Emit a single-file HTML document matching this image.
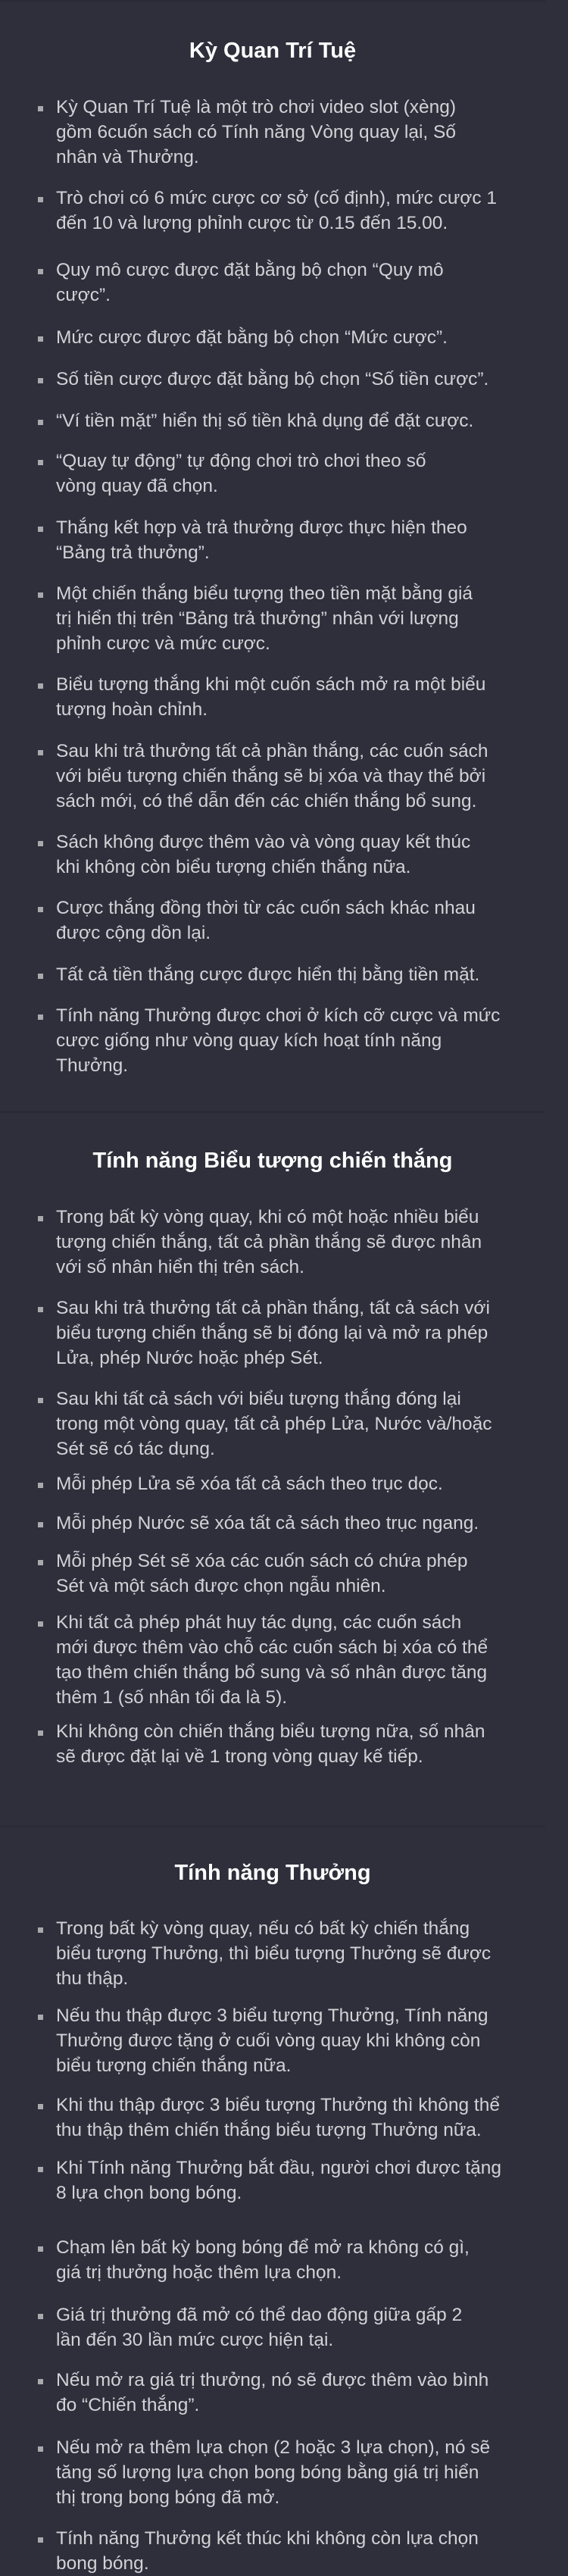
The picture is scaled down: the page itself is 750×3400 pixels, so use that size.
<!DOCTYPE html>
<html><head><meta charset="utf-8">
<style>
html,body{margin:0;padding:0;}
body{width:750px;height:3369px;overflow:hidden;background:#2e2f3b;position:relative;font-family:"Liberation Sans","DejaVu Sans",sans-serif;}
.bar{position:absolute;left:0;width:720px;height:3px;background:#292a34;}
.t{position:absolute;left:0;width:720px;text-align:center;color:#fff;font-size:29px;font-weight:bold;line-height:40px;white-space:nowrap;}
.i{position:absolute;left:74px;color:#d2d2d6;font-size:24.5px;line-height:33px;white-space:nowrap;}
.i:before{content:"";position:absolute;left:-24px;top:15px;width:7px;height:7px;background:#a9a9ae;}
</style></head><body>
<div class="bar" style="top:0"></div>
<div class="t" style="top:47px">Kỳ Quan Trí Tuệ</div>
<div class="i" style="top:125px">Kỳ Quan Trí Tuệ là một trò chơi video slot (xèng)<br>gồm 6cuốn sách có Tính năng Vòng quay lại, Số<br>nhân và Thưởng.</div>
<div class="i" style="top:245px">Trò chơi có 6 mức cược cơ sở (cố định), mức cược 1<br>đến 10 và lượng phỉnh cược từ 0.15 đến 15.00.</div>
<div class="i" style="top:340px">Quy mô cược được đặt bằng bộ chọn “Quy mô<br>cược”.</div>
<div class="i" style="top:429px">Mức cược được đặt bằng bộ chọn “Mức cược”.</div>
<div class="i" style="top:484px">Số tiền cược được đặt bằng bộ chọn “Số tiền cược”.</div>
<div class="i" style="top:539px">“Ví tiền mặt” hiển thị số tiền khả dụng để đặt cược.</div>
<div class="i" style="top:592px">“Quay tự động” tự động chơi trò chơi theo số<br>vòng quay đã chọn.</div>
<div class="i" style="top:680px">Thắng kết hợp và trả thưởng được thực hiện theo<br>“Bảng trả thưởng”.</div>
<div class="i" style="top:767px">Một chiến thắng biểu tượng theo tiền mặt bằng giá<br>trị hiển thị trên “Bảng trả thưởng” nhân với lượng<br>phỉnh cược và mức cược.</div>
<div class="i" style="top:887px">Biểu tượng thắng khi một cuốn sách mở ra một biểu<br>tượng hoàn chỉnh.</div>
<div class="i" style="top:975px">Sau khi trả thưởng tất cả phần thắng, các cuốn sách<br>với biểu tượng chiến thắng sẽ bị xóa và thay thế bởi<br>sách mới, có thể dẫn đến các chiến thắng bổ sung.</div>
<div class="i" style="top:1095px">Sách không được thêm vào và vòng quay kết thúc<br>khi không còn biểu tượng chiến thắng nữa.</div>
<div class="i" style="top:1182px">Cược thắng đồng thời từ các cuốn sách khác nhau<br>được cộng dồn lại.</div>
<div class="i" style="top:1270px">Tất cả tiền thắng cược được hiển thị bằng tiền mặt.</div>
<div class="i" style="top:1324px">Tính năng Thưởng được chơi ở kích cỡ cược và mức<br>cược giống như vòng quay kích hoạt tính năng<br>Thưởng.</div>

<div class="bar" style="top:1466px"></div>
<div class="t" style="top:1512px">Tính năng Biểu tượng chiến thắng</div>
<div class="i" style="top:1590px">Trong bất kỳ vòng quay, khi có một hoặc nhiều biểu<br>tượng chiến thắng, tất cả phần thắng sẽ được nhân<br>với số nhân hiển thị trên sách.</div>
<div class="i" style="top:1710px">Sau khi trả thưởng tất cả phần thắng, tất cả sách với<br>biểu tượng chiến thắng sẽ bị đóng lại và mở ra phép<br>Lửa, phép Nước hoặc phép Sét.</div>
<div class="i" style="top:1830px">Sau khi tất cả sách với biểu tượng thắng đóng lại<br>trong một vòng quay, tất cả phép Lửa, Nước và/hoặc<br>Sét sẽ có tác dụng.</div>
<div class="i" style="top:1942px">Mỗi phép Lửa sẽ xóa tất cả sách theo trục dọc.</div>
<div class="i" style="top:1994px">Mỗi phép Nước sẽ xóa tất cả sách theo trục ngang.</div>
<div class="i" style="top:2044px">Mỗi phép Sét sẽ xóa các cuốn sách có chứa phép<br>Sét và một sách được chọn ngẫu nhiên.</div>
<div class="i" style="top:2125px">Khi tất cả phép phát huy tác dụng, các cuốn sách<br>mới được thêm vào chỗ các cuốn sách bị xóa có thể<br>tạo thêm chiến thắng bổ sung và số nhân được tăng<br>thêm 1 (số nhân tối đa là 5).</div>
<div class="i" style="top:2269px">Khi không còn chiến thắng biểu tượng nữa, số nhân<br>sẽ được đặt lại về 1 trong vòng quay kế tiếp.</div>

<div class="bar" style="top:2409px"></div>
<div class="t" style="top:2452px">Tính năng Thưởng</div>
<div class="i" style="top:2529px">Trong bất kỳ vòng quay, nếu có bất kỳ chiến thắng<br>biểu tượng Thưởng, thì biểu tượng Thưởng sẽ được<br>thu thập.</div>
<div class="i" style="top:2644px">Nếu thu thập được 3 biểu tượng Thưởng, Tính năng<br>Thưởng được tặng ở cuối vòng quay khi không còn<br>biểu tượng chiến thắng nữa.</div>
<div class="i" style="top:2762px">Khi thu thập được 3 biểu tượng Thưởng thì không thể<br>thu thập thêm chiến thắng biểu tượng Thưởng nữa.</div>
<div class="i" style="top:2845px">Khi Tính năng Thưởng bắt đầu, người chơi được tặng<br>8 lựa chọn bong bóng.</div>
<div class="i" style="top:2950px">Chạm lên bất kỳ bong bóng để mở ra không có gì,<br>giá trị thưởng hoặc thêm lựa chọn.</div>
<div class="i" style="top:3039px">Giá trị thưởng đã mở có thể dao động giữa gấp 2<br>lần đến 30 lần mức cược hiện tại.</div>
<div class="i" style="top:3125px">Nếu mở ra giá trị thưởng, nó sẽ được thêm vào bình<br>đo “Chiến thắng”.</div>
<div class="i" style="top:3214px">Nếu mở ra thêm lựa chọn (2 hoặc 3 lựa chọn), nó sẽ<br>tăng số lượng lựa chọn bong bóng bằng giá trị hiển<br>thị trong bong bóng đã mở.</div>
<div class="i" style="top:3334px">Tính năng Thưởng kết thúc khi không còn lựa chọn<br>bong bóng.</div>
</body></html>
